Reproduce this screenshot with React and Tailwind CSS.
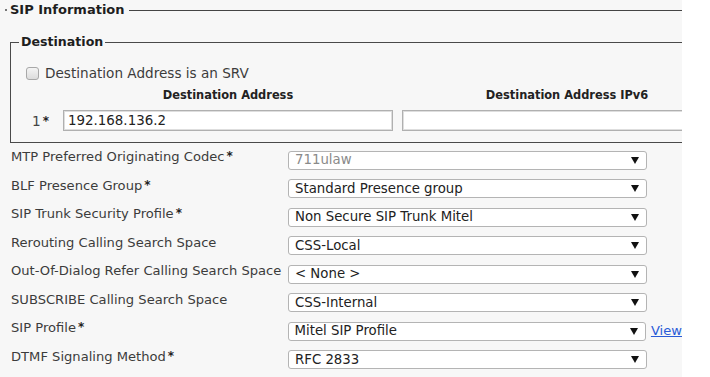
import React from "react";

const rows = [
  { label: "MTP Preferred Originating Codec", req: true, value: "711ulaw", disabled: true },
  { label: "BLF Presence Group", req: true, value: "Standard Presence group" },
  { label: "SIP Trunk Security Profile", req: true, value: "Non Secure SIP Trunk Mitel" },
  { label: "Rerouting Calling Search Space", value: "CSS-Local" },
  { label: "Out-Of-Dialog Refer Calling Search Space", value: "< None >" },
  { label: "SUBSCRIBE Calling Search Space", value: "CSS-Internal" },
  { label: "SIP Profile", req: true, value: "Mitel SIP Profile", view: true },
  { label: "DTMF Signaling Method", req: true, value: "RFC 2833" },
];

function Arrow() {
  return (
    <svg width="8" height="7" viewBox="0 0 8 7" className="shrink-0">
      <polygon points="0,0 8,0 4,7" fill="#111" />
    </svg>
  );
}

export default function App() {
  return (
    <div className="w-[710px] h-[377px] overflow-hidden bg-white font-['DejaVu_Sans',sans-serif] text-[13.6px] leading-[16px] text-[#3c3c3c]">
      <div className="w-[682px] h-full bg-[#f7f7f7] overflow-hidden">
        {/* SIP Information legend */}
        <div className="h-[20px] flex items-center">
          <div className="ml-[5px] w-[2px] h-[2px] bg-[#777]" />
          <div className="ml-[3px] font-bold text-[13px] text-[#1e1e1e]">SIP Information</div>
          <div className="ml-[4px] flex-1 h-px bg-[#444]" />
        </div>

        {/* Destination fieldset */}
        <fieldset className="ml-[10px] mt-[14px] w-[700px] border-t border-l border-b border-[#4a4a4a] pb-[11px]">
          <legend className="ml-[8px] px-[2px] font-bold text-[12.6px] leading-[16px] text-[#1e1e1e]">Destination</legend>
          <div className="mt-[15px] h-[16px] flex items-center">
            <div className="ml-[15px] w-[13px] h-[13px] rounded-[3px] border border-[#a8a8a8] bg-gradient-to-b from-[#f4f4f4] to-[#dcdcdc]" />
            <span className="ml-[6px]">Destination Address is an SRV</span>
          </div>
          <div className="mt-[6px] h-[16px] flex items-center font-bold text-[11.4px] text-[#222]">
            <div className="ml-[52px] w-[330px] text-center">Destination Address</div>
            <div className="ml-[9px] w-[330px] text-center">Destination Address IPv6</div>
          </div>
          <div className="mt-[7px] h-[21px] flex items-center">
            <div className="w-[52px] pl-[21px] text-[#444]">
              1<sup className="text-[12px] font-bold text-[#222] ml-[2px] relative -top-[1px]">*</sup>
            </div>
            <div className="w-[330px] h-[21px] bg-white border border-[#b0b0b0] shadow-[inset_0_0_0_1px_#dedede] flex items-center pl-[4px] text-[#222] text-[13.4px]">
              192.168.136.2
            </div>
            <div className="ml-[9px] w-[330px] h-[21px] bg-white border border-[#b0b0b0] shadow-[inset_0_0_0_1px_#dedede]" />
          </div>
        </fieldset>

        {/* Field rows */}
        <div className="mt-[3px] pl-[11px] flex flex-col">
          {rows.map((r) => (
            <div key={r.label} className="h-[28.5px] flex items-center">
              <div className="w-[277px] pb-[6px] whitespace-nowrap text-[13.1px]">
                {r.label}
                {r.req && <sup className="text-[12px] font-bold text-[#222] ml-[2px] relative -top-[1px]">*</sup>}
              </div>
              <div className="w-[359px] h-[19px] bg-white border border-[#b4b4b4] rounded-[3px] flex items-center justify-between pl-[6px] pr-[7px] text-[13.3px]">
                <span className={r.disabled ? "text-[#8a8a8a]" : "text-[#222]"}>{r.value}</span>
                <Arrow />
              </div>
              {r.view && (
                <a className="ml-[5px] text-[#2a5bd7] underline cursor-pointer text-[13.1px]">View</a>
              )}
            </div>
          ))}
        </div>
      </div>
    </div>
  );
}
